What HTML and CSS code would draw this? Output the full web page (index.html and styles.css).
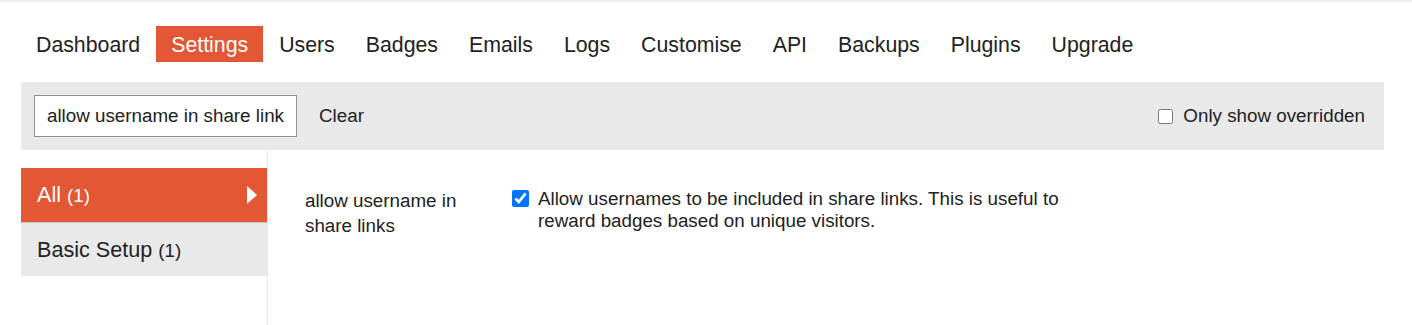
FILE: index.html
```html
<!DOCTYPE html>
<html lang="en">
<head>
  <meta charset="UTF-8">
  <meta name="viewport" content="width=device-width, initial-scale=1.0">
  <title>Admin Settings</title>
  <link rel="stylesheet" href="styles.css">
</head>
<body>
  <div class="top-shadow"></div>

  <div class="admin">
    <ul class="nav">
      <li><a href="#">Dashboard</a></li>
      <li class="active"><a href="#">Settings</a></li>
      <li><a href="#">Users</a></li>
      <li><a href="#">Badges</a></li>
      <li><a href="#">Emails</a></li>
      <li><a href="#">Logs</a></li>
      <li><a href="#">Customise</a></li>
      <li><a href="#">API</a></li>
      <li><a href="#">Backups</a></li>
      <li><a href="#">Plugins</a></li>
      <li><a href="#">Upgrade</a></li>
    </ul>

    <div class="filter-bar">
      <input type="text" class="filter-input" value="allow username in share link">
      <button class="clear">Clear</button>
      <label class="overridden">
        <input type="checkbox">
        Only show overridden
      </label>
    </div>

    <div class="settings">
      <div class="categories">
        <ul>
          <li class="active"><a href="#">All <span class="count">(1)</span></a></li>
          <li><a href="#">Basic Setup <span class="count">(1)</span></a></li>
        </ul>
      </div>

      <div class="setting-list">
        <div class="setting">
          <div class="setting-label">allow username in share links</div>
          <label class="setting-value">
            <input type="checkbox" checked>
            <span>Allow usernames to be included in share links. This is useful to reward badges based on unique visitors.</span>
          </label>
        </div>
      </div>
    </div>
  </div>
</body>
</html>
```

FILE: styles.css
```css
body {
  font-family: 'Liberation Sans', Arial, sans-serif;
  font-size: 18.8px;
  margin: 0;
  padding: 0;
  color: #222;
  background: #fff;
}

.top-shadow {
  height: 4px;
  background: linear-gradient(to bottom, rgba(0, 0, 0, 0.08), rgba(0, 0, 0, 0));
}

.admin {
  padding: 22px 28px 0 21px;
}

/* top navigation */
.nav {
  list-style: none;
  margin: 0 0 20px 0;
  padding: 0;
  display: flex;
  gap: 1px;
}

.nav a {
  display: block;
  padding: 7px 15px 5px;
  font-size: 21.3px;
  line-height: 24px;
  color: #222;
  text-decoration: none;
}

.nav .active a {
  background-color: #e45735;
  color: #fff;
}

/* filter bar */
.filter-bar {
  display: flex;
  align-items: center;
  background-color: #e9e9e9;
  padding: 13px 19px 13px 13px;
}

.filter-input {
  width: 263px;
  height: 42px;
  box-sizing: border-box;
  padding: 0 12px;
  border: 1px solid #919191;
  background: #fff;
  font-family: inherit;
  font-size: 18.8px;
  color: #222;
}

.clear {
  background: none;
  border: none;
  padding: 0 0 0 22px;
  font-family: inherit;
  font-size: 18.8px;
  color: #222;
  cursor: pointer;
}

.overridden {
  margin-left: auto;
  display: flex;
  align-items: center;
}

.overridden input {
  width: 15px;
  height: 15px;
  margin: 0 10px 0 0;
}

/* settings area */
.settings {
  display: flex;
  min-height: 175px;
}

.categories {
  width: 246px;
  border-right: 1px solid #e9e9e9;
  padding-top: 18px;
}

.categories ul {
  list-style: none;
  margin: 0;
  padding: 0;
}

.categories li {
  background-color: #e9e9e9;
}

.categories li + li {
  border-top: 1px solid #c4c4c4;
}

.categories a {
  display: block;
  position: relative;
  padding: 0 16px;
  height: 53px;
  line-height: 53px;
  font-size: 21.6px;
  color: #222;
  text-decoration: none;
}

.categories .count {
  font-size: 18.8px;
}

.categories .active {
  background-color: #e45735;
}

.categories .active a {
  color: #fff;
  height: 54px;
  line-height: 54px;
}

.categories .active a::after {
  content: '';
  position: absolute;
  right: 10px;
  top: 18px;
  border-left: 10px solid #fff;
  border-top: 9.5px solid transparent;
  border-bottom: 9.5px solid transparent;
}

.setting-list {
  padding: 20px 0 0 37px;
}

.setting {
  display: flex;
}

.setting-label {
  width: 180px;
  margin-right: 27px;
  padding-top: 18px;
  line-height: 25px;
}

.setting-value {
  display: flex;
  align-items: flex-start;
  width: 580px;
  line-height: 22px;
  padding-top: 18px;
}

.setting-value input {
  width: 17px;
  height: 17px;
  margin: 2px 9px 0 0;
  flex-shrink: 0;
}
```
